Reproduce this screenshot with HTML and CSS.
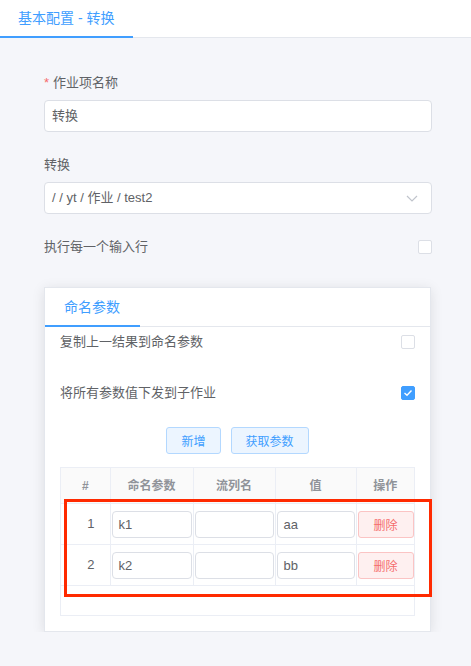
FILE: index.html
```html
<!DOCTYPE html>
<html lang="zh-CN">
<head>
    <meta charset="UTF-8">
    <meta name="viewport" content="width=device-width, initial-scale=1.0">
    <title>基本配置 - 转换</title>
    <link rel="stylesheet" href="styles.css">
</head>
<body>
    <div class="topbar">
        <div class="topbar-tab">基本配置 - 转换</div>
    </div>

    <div class="form">
        <div class="field">
            <div class="field-label"><span class="req">*</span>作业项名称</div>
            <div class="text-input">转换</div>
        </div>

        <div class="field">
            <div class="field-label">转换</div>
            <div class="text-input select">
                <span>/ / yt / 作业 / test2</span>
                <svg class="chevron" width="12" height="7" viewBox="0 0 12 7">
                    <path d="M1 1 L6 6 L11 1" fill="none" stroke="#c0c4cc" stroke-width="1.2"/>
                </svg>
            </div>
        </div>

        <div class="check-row">
            <span>执行每一个输入行</span>
            <span class="checkbox"></span>
        </div>

        <div class="card">
            <div class="card-tabs">
                <div class="card-tab">命名参数</div>
            </div>
            <div class="card-body">
                <div class="check-row">
                    <span>复制上一结果到命名参数</span>
                    <span class="checkbox"></span>
                </div>
                <div class="check-row second">
                    <span>将所有参数值下发到子作业</span>
                    <span class="checkbox checked">
                        <svg width="10" height="8" viewBox="0 0 10 8">
                            <path d="M1.5 4 L4 6.3 L8.5 1.5" fill="none" stroke="#fff" stroke-width="1.4"/>
                        </svg>
                    </span>
                </div>

                <div class="actions">
                    <button class="btn">新增</button>
                    <button class="btn">获取参数</button>
                </div>

                <div class="table-wrap">
                    <table class="params">
                        <colgroup>
                            <col style="width: 49px">
                            <col style="width: 83px">
                            <col style="width: 82px">
                            <col style="width: 81px">
                            <col>
                        </colgroup>
                        <tr>
                            <th>#</th>
                            <th>命名参数</th>
                            <th>流列名</th>
                            <th>值</th>
                            <th>操作</th>
                        </tr>
                        <tr>
                            <td class="idx">1</td>
                            <td><div class="cell-input">k1</div></td>
                            <td><div class="cell-input"></div></td>
                            <td><div class="cell-input">aa</div></td>
                            <td><button class="btn-danger">删除</button></td>
                        </tr>
                        <tr>
                            <td class="idx">2</td>
                            <td><div class="cell-input">k2</div></td>
                            <td><div class="cell-input"></div></td>
                            <td><div class="cell-input">bb</div></td>
                            <td><button class="btn-danger">删除</button></td>
                        </tr>
                    </table>
                    <div class="table-empty"></div>
                    <div class="highlight"></div>
                </div>
            </div>
        </div>
    </div>
</body>
</html>
```

FILE: styles.css
```css
body {
    margin: 0;
    background-color: #f5f6fa;
    color: #606266;
    font-family: "Liberation Sans", "Noto Sans CJK SC", sans-serif;
    font-size: 13px;
    line-height: 20px;
}
.topbar {
    height: 37px;
    background-color: #ffffff;
    border-bottom: 1px solid #e4e7ed;
    display: flex;
}
.topbar-tab {
    width: 133px;
    box-sizing: border-box;
    padding-left: 18px;
    height: 38px;
    line-height: 36px;
    font-size: 14px;
    color: #409eff;
    border-bottom: 2px solid #409eff;
}
.form {
    padding: 35px 39px 0 44px;
}
.field {
    margin-bottom: 23px;
}
.field-label {
    margin-bottom: 7px;
}
.req {
    color: #f56c6c;
    margin-right: 4px;
}
.text-input {
    height: 32px;
    box-sizing: border-box;
    background-color: #ffffff;
    border: 1px solid #dcdfe6;
    border-radius: 4px;
    padding: 0 7px;
    line-height: 30px;
}
.select {
    display: flex;
    justify-content: space-between;
    align-items: center;
    padding-right: 13px;
}
.check-row {
    display: flex;
    justify-content: space-between;
    align-items: center;
    height: 20px;
    margin-top: 1px;
}
.checkbox {
    width: 14px;
    height: 14px;
    box-sizing: border-box;
    border: 1px solid #dcdfe6;
    border-radius: 2px;
    background-color: #ffffff;
    display: flex;
    align-items: center;
    justify-content: center;
}
.checkbox.checked {
    background-color: #409eff;
    border-color: #409eff;
}
.card {
    margin-top: 30px;
    margin-right: 1px;
    background-color: #ffffff;
    border: 1px solid #e4e7ed;
    box-shadow: 0 2px 12px rgba(0, 0, 0, 0.1);
}
.card-tabs {
    display: flex;
    height: 38px;
    border-bottom: 1px solid #e4e7ed;
}
.card-tab {
    width: 95px;
    box-sizing: border-box;
    padding-left: 19px;
    height: 39px;
    line-height: 38px;
    font-size: 14px;
    color: #409eff;
    border-bottom: 2px solid #409eff;
}
.card-body {
    padding: 5px 15px 15px 15px;
}
.card-body .check-row {
    margin-top: 0;
}
.card-body .check-row.second {
    margin-top: 31px;
}
.actions {
    display: flex;
    justify-content: center;
    gap: 10px;
    margin-top: 24px;
}
.btn {
    height: 27px;
    padding: 0 14px;
    font-family: inherit;
    font-size: 12px;
    color: #409eff;
    background-color: #ecf5ff;
    border: 1px solid #b3d8ff;
    border-radius: 3px;
}
.table-wrap {
    position: relative;
    margin-top: 13px;
    border: 1px solid #ebeef5;
}
.params {
    width: 100%;
    border-collapse: collapse;
    table-layout: fixed;
}
.params th, .params td {
    border-right: 1px solid #ebeef5;
    border-bottom: 1px solid #ebeef5;
    padding: 0 1px;
}
.params th:last-child, .params td:last-child {
    border-right: none;
}
.params th {
    height: 35px;
    background-color: #fafafa;
    color: #909399;
    font-size: 12px;
    font-weight: bold;
    text-align: center;
}
.params td {
    height: 40px;
}
.params td.idx {
    text-align: right;
    padding-right: 15px;
    font-size: 13px;
}
.cell-input {
    height: 27px;
    box-sizing: border-box;
    border: 1px solid #dcdfe6;
    border-radius: 4px;
    padding: 0 6px;
    line-height: 25px;
    font-size: 13px;
}
.btn-danger {
    width: 56px;
    height: 27px;
    font-family: inherit;
    font-size: 12px;
    color: #f56c6c;
    background-color: #fef0f0;
    border: 1px solid #fbc4c4;
    border-radius: 3px;
}
.table-empty {
    height: 29px;
}
.highlight {
    position: absolute;
    left: 3px;
    top: 31px;
    width: 368px;
    height: 98px;
    box-sizing: border-box;
    border: 3px solid #ff2a00;
}
```
